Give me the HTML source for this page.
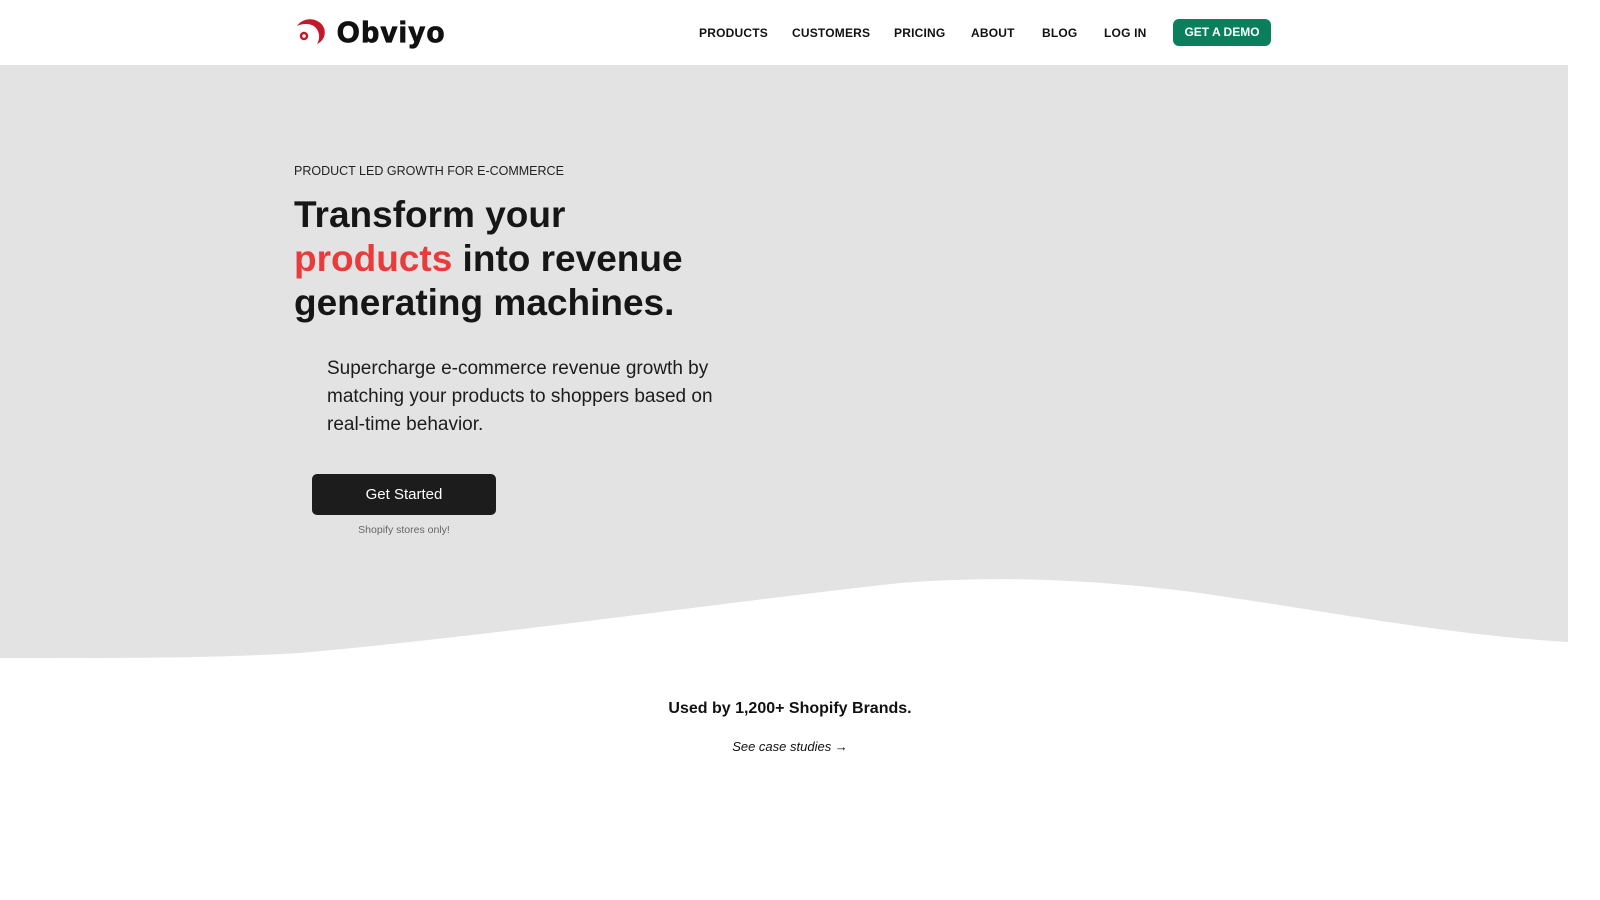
<!DOCTYPE html>
<html><head><meta charset="utf-8"><style>
*{margin:0;padding:0;box-sizing:border-box}
body{width:1600px;height:900px;background:#fff;font-family:"Liberation Sans",Arial,sans-serif;position:relative;overflow:hidden;color:#1b1b1b}
.hdr{position:absolute;left:0;top:0;width:1568px;height:65px;background:#fff}
.logo{position:absolute;left:295px;top:14px}
.nav a{position:absolute;top:26px;font-size:12px;font-weight:bold;color:#111;text-decoration:none;letter-spacing:.2px}
.demo{position:absolute;left:1173px;top:19px;width:98px;height:27px;background:#0a7f5c;border-radius:6px;color:#fff;font-size:12px;font-weight:bold;text-align:center;line-height:27px}
.hero{position:absolute;left:0;top:65px;width:1568px;height:600px}
.eyebrow{position:absolute;left:294px;top:164px;font-size:12.5px;color:#222}
h1{position:absolute;left:294px;top:193px;font-size:37px;line-height:44px;font-weight:bold;color:#161616}
h1 span{color:#e93b3b}
.sub{position:absolute;left:327px;top:355px;font-size:19px;line-height:28px;color:#1c1c1c;width:420px}
.btn{position:absolute;left:312px;top:474px;width:184px;height:41px;background:#1c1c1c;border-radius:5px;color:#fff;font-size:15px;text-align:center;line-height:41px}
.note{position:absolute;left:312px;top:524px;width:184px;text-align:center;font-size:10.5px;color:#666}
.used{position:absolute;left:0;width:1580px;top:700px;text-align:center;font-size:16px;font-weight:bold;color:#111}
.see{position:absolute;left:0;width:1580px;top:739px;text-align:center;font-size:13px;font-style:italic;color:#111}
</style></head><body>
<svg class="hero" width="1568" height="600" viewBox="0 0 1568 600"><path d="M0 0H1568V577C1450 570 1350 550 1200 528C1100 515 1000 510 900 518C700 540 500 570 300 588C200 594 100 593 0 593Z" fill="#e3e3e3"/></svg>
<div class="hdr">
<svg class="logo" width="170" height="36" viewBox="0 0 170 36"><path d="M2 12C8 3 22 3 28 12C32 19 29 27 22 30C25 25 25 19 21 14C17 9 8 9 2 12Z" fill="#c21a2a"/><circle cx="9" cy="22" r="3" fill="none" stroke="#c21a2a" stroke-width="2.5"/><text x="42" y="28" font-family="Liberation Sans,Arial,sans-serif" font-weight="bold" font-size="29" fill="#111" stroke="#111" stroke-width="1.2" letter-spacing="1.8">Obviyo</text></svg>
</div>
<div class="nav">
<a style="left:699px">PRODUCTS</a><a style="left:792px">CUSTOMERS</a><a style="left:894px">PRICING</a><a style="left:971px">ABOUT</a><a style="left:1042px">BLOG</a><a style="left:1104px">LOG IN</a>
</div>
<div class="demo">GET A DEMO</div>
<div class="eyebrow">PRODUCT LED GROWTH FOR E-COMMERCE</div>
<h1>Transform your<br><span>products</span> into revenue<br>generating machines.</h1>
<div class="sub">Supercharge e-commerce revenue growth by matching your products to shoppers based on real-time behavior.</div>
<div class="btn">Get Started</div>
<div class="note">Shopify stores only!</div>
<div class="used">Used by 1,200+ Shopify Brands.</div>
<div class="see">See case studies →</div>
</body></html>
